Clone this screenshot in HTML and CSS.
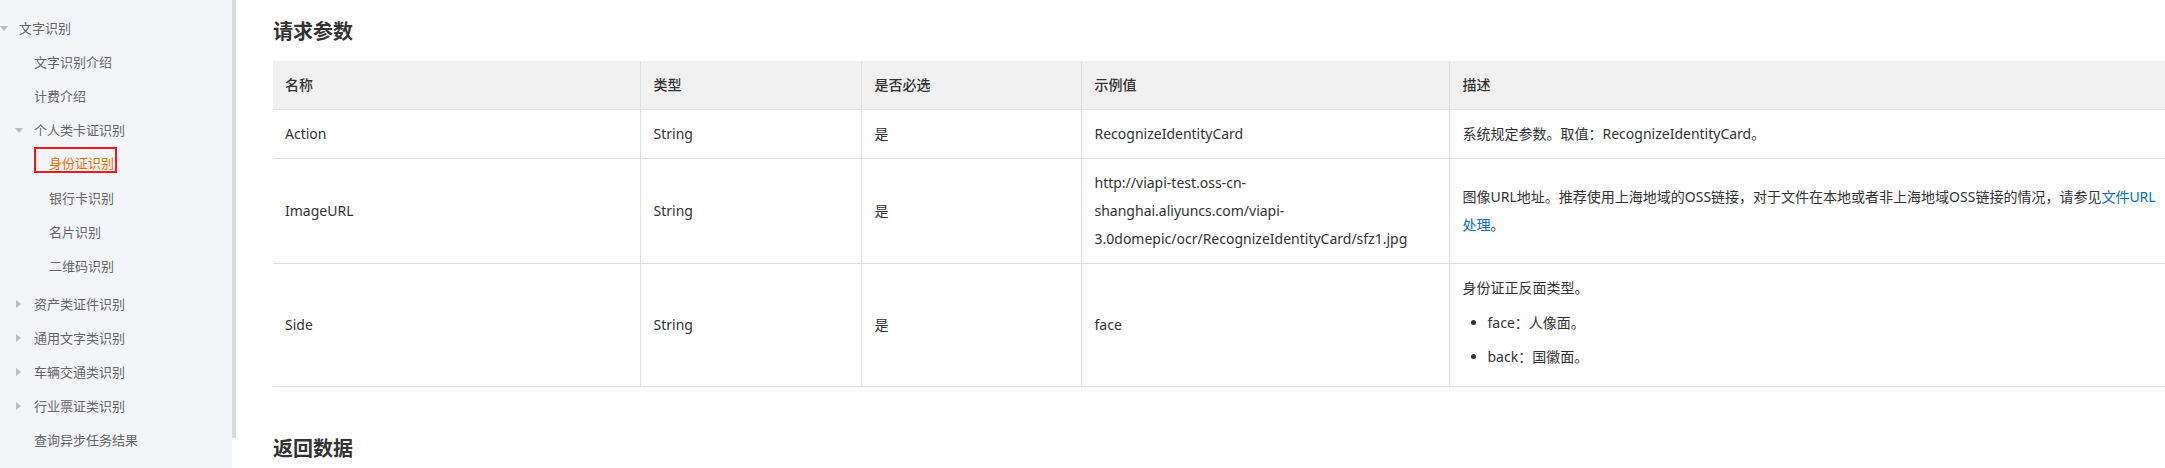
FILE: index.html
```html
<!DOCTYPE html>
<html lang="zh-CN">
<head>
<meta charset="utf-8">
<title>身份证识别 - 请求参数</title>
<link rel="stylesheet" href="styles.css">
</head>
<body>
<div class="page">
  <nav class="sidebar">
    <ul class="tree">
      <li class="item l1"><span class="caret down"></span><span class="label">文字识别</span></li>
      <li class="item l2"><span class="caret"></span><span class="label">文字识别介绍</span></li>
      <li class="item l2"><span class="caret"></span><span class="label">计费介绍</span></li>
      <li class="item l2"><span class="caret down"></span><span class="label">个人类卡证识别</span></li>
      <li class="item l3"><span class="caret"></span><span class="label active">身份证识别</span></li>
      <li class="item l3"><span class="caret"></span><span class="label">银行卡识别</span></li>
      <li class="item l3"><span class="caret"></span><span class="label">名片识别</span></li>
      <li class="item l3 group-end"><span class="caret"></span><span class="label">二维码识别</span></li>
      <li class="item l2"><span class="caret right"></span><span class="label">资产类证件识别</span></li>
      <li class="item l2"><span class="caret right"></span><span class="label">通用文字类识别</span></li>
      <li class="item l2"><span class="caret right"></span><span class="label">车辆交通类识别</span></li>
      <li class="item l2"><span class="caret right"></span><span class="label">行业票证类识别</span></li>
      <li class="item l2"><span class="caret"></span><span class="label">查询异步任务结果</span></li>
    </ul>
  </nav>
  <div class="scrolltrack"><div class="thumb"></div></div>
  <main class="content">
    <h2 class="section-title">请求参数</h2>
    <table class="params">
      <colgroup>
        <col class="c-name">
        <col class="c-type">
        <col class="c-req">
        <col class="c-example">
        <col class="c-desc">
      </colgroup>
      <thead>
        <tr>
          <th>名称</th>
          <th>类型</th>
          <th>是否必选</th>
          <th>示例值</th>
          <th>描述</th>
        </tr>
      </thead>
      <tbody>
        <tr>
          <td>Action</td>
          <td>String</td>
          <td>是</td>
          <td>RecognizeIdentityCard</td>
          <td>系统规定参数。取值：RecognizeIdentityCard。</td>
        </tr>
        <tr>
          <td>ImageURL</td>
          <td>String</td>
          <td>是</td>
          <td class="nowrap">http://viapi-test.oss-cn-<br>shanghai.aliyuncs.com/viapi-<br>3.0domepic/ocr/RecognizeIdentityCard/sfz1.jpg</td>
          <td class="nowrap">图像URL地址。推荐使用上海地域的OSS链接，对于文件在本地或者非上海地域OSS链接的情况，请参见<a href="#" class="link">文件URL<br>处理</a>。</td>
        </tr>
        <tr>
          <td>Side</td>
          <td>String</td>
          <td>是</td>
          <td>face</td>
          <td>
            <p class="desc-p">身份证正反面类型。</p>
            <ul class="desc-list">
              <li>face：人像面。</li>
              <li>back：国徽面。</li>
            </ul>
          </td>
        </tr>
      </tbody>
    </table>
    <h2 class="section-title next">返回数据</h2>
    <div class="next-table"></div>
  </main>
</div>
</body>
</html>
```

FILE: styles.css
```css
html, body {
  margin: 0;
  padding: 0;
  background: #ffffff;
}
body {
  width: 2165px;
  height: 468px;
  overflow: hidden;
  font-family: "Noto Sans", "Noto Sans CJK SC", sans-serif;
  color: #333333;
}
.page {
  display: flex;
  height: 468px;
}

/* Sidebar */
.sidebar {
  width: 232px;
  flex: none;
  background: #f3f5f8;
  height: 468px;
  overflow: hidden;
  font-family: "Noto Sans CJK SC", sans-serif;
  font-size: 13px;
  color: #666666;
}
.tree {
  list-style: none;
  margin: 0;
  padding: 11px 0 0 0;
}
.item {
  display: flex;
  align-items: center;
  height: 34px;
  white-space: nowrap;
}
.item.l1 { padding-left: 0; }
.item.l2 { padding-left: 15px; }
.item.l3 { padding-left: 30px; }
.item.group-end { margin-bottom: 4px; }
.caret {
  width: 19px;
  flex: none;
  display: flex;
  align-items: center;
  height: 10px;
}
.caret.down::before {
  content: "";
  display: block;
  width: 0;
  height: 0;
  border-left: 4px solid transparent;
  border-right: 4px solid transparent;
  border-top: 5px solid #b9bcc0;
}
.caret.right::before {
  content: "";
  display: block;
  width: 0;
  height: 0;
  margin-left: 1px;
  border-top: 4px solid transparent;
  border-bottom: 4px solid transparent;
  border-left: 5px solid #b9bcc0;
}
.label {
  line-height: 20px;
}
.label.active {
  color: #ff6a00;
  border: 2px solid #f01818;
  margin-left: -15px;
  margin-bottom: 8px;
  padding: 6px 1px 0 13px;
  line-height: 16px;
}

.scrolltrack {
  width: 4px;
  flex: none;
  height: 468px;
  background: #ffffff;
}
.thumb {
  height: 438px;
  background: #dcdcdc;
}

/* Content */
.content {
  flex: none;
  width: 1990px;
  padding: 18px 0 0 37px;
  box-sizing: border-box;
}
.section-title {
  margin: 0;
  font-size: 20px;
  line-height: 28px;
  font-weight: 700;
  color: #333333;
}
.section-title.next {
  margin-top: 48px;
}
.params {
  margin-top: 15px;
  border-collapse: collapse;
  table-layout: fixed;
  width: 1936px;
  font-size: 14px;
  line-height: 28px;
  color: #333333;
}
.c-name { width: 367px; }
.c-type { width: 221px; }
.c-req { width: 220px; }
.c-example { width: 368px; }
.c-desc { width: 760px; }
.params th,
.params td {
  padding: 10px 13px;
  text-align: left;
  vertical-align: middle;
  border-bottom: 1px solid #e0e0e0;
  border-left: 1px solid #e0e0e0;
}
.params th:first-child,
.params td:first-child {
  border-left: none;
  padding-left: 12px;
}
.params th {
  background: #f1f1f1;
  font-weight: 500;
  color: #333333;
}
.params td {
  font-weight: 400;
}
.params td.nowrap {
  white-space: nowrap;
}
.link {
  color: #0070cc;
  text-decoration: none;
}
.desc-p {
  margin: 0;
}
.desc-list {
  margin: 7px 0 5px 0;
  padding-left: 25px;
  list-style: disc;
}
.desc-list li + li {
  margin-top: 6px;
}
.next-table {
  margin-top: 5px;
  width: 1936px;
  height: 20px;
  border-top: 1px solid #e0e0e0;
}
```
